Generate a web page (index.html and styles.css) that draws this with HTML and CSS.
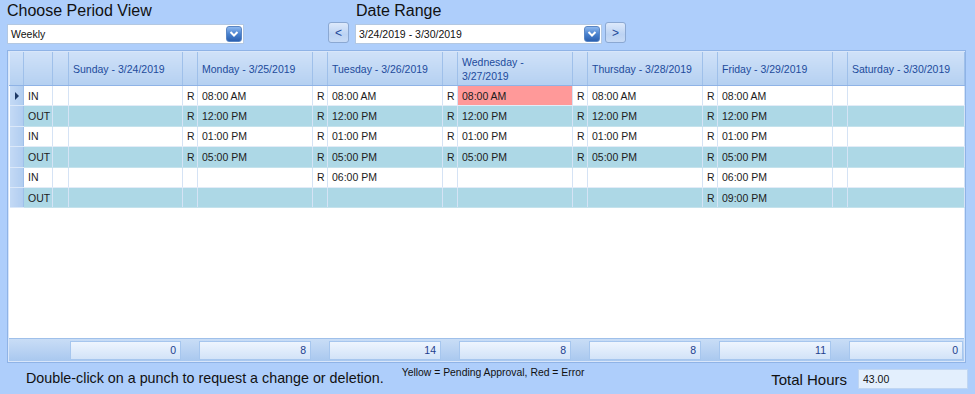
FILE: index.html
```html
<!DOCTYPE html>
<html lang="en">
<head>
  <meta charset="UTF-8" />
  <title>Timecard</title>
  <link rel="stylesheet" href="styles.css">
</head>
<body>
  <div class="top">
    <div class="field period">
      <div class="caption">Choose Period View</div>
      <div class="combo">
        <span>Weekly</span>
        <span class="drop"><svg width="10" height="8" viewBox="0 0 10 8"><path d="M1.5 2 L5 5.5 L8.5 2" fill="none" stroke="#fff" stroke-width="2"/></svg></span>
      </div>
    </div>
    <div class="field range">
      <div class="caption indent">Date Range</div>
      <div class="range-row">
        <button class="nav">&lt;</button>
        <div class="combo wide">
          <span>3/24/2019 - 3/30/2019</span>
          <span class="drop"><svg width="10" height="8" viewBox="0 0 10 8"><path d="M1.5 2 L5 5.5 L8.5 2" fill="none" stroke="#fff" stroke-width="2"/></svg></span>
        </div>
        <button class="nav">&gt;</button>
      </div>
    </div>
  </div>

  <div class="panel">
    <table class="punches">
      <colgroup>
        <col class="c-ind"><col class="c-type"><col class="c-r">
        <col class="c-day"><col class="c-r"><col class="c-day"><col class="c-r">
        <col class="c-day"><col class="c-r"><col class="c-day"><col class="c-r">
        <col class="c-day"><col class="c-r"><col class="c-day"><col class="c-r">
        <col class="c-last">
      </colgroup>
      <thead>
        <tr>
          <th></th><th></th><th></th>
          <th>Sunday - 3/24/2019</th><th></th>
          <th>Monday - 3/25/2019</th><th></th>
          <th>Tuesday - 3/26/2019</th><th></th>
          <th>Wednesday -<br>3/27/2019</th><th></th>
          <th>Thursday - 3/28/2019</th><th></th>
          <th>Friday - 3/29/2019</th><th></th>
          <th>Saturday - 3/30/2019</th>
        </tr>
      </thead>
      <tbody>
        <tr>
          <td class="ind"><span class="arrow"></span></td><td>IN</td><td></td>
          <td></td><td>R</td><td>08:00 AM</td><td>R</td><td>08:00 AM</td><td>R</td><td class="error">08:00 AM</td><td>R</td><td>08:00 AM</td><td>R</td><td>08:00 AM</td><td></td><td></td>
        </tr>
        <tr class="out">
          <td class="ind"></td><td>OUT</td><td></td>
          <td></td><td>R</td><td>12:00 PM</td><td>R</td><td>12:00 PM</td><td>R</td><td>12:00 PM</td><td>R</td><td>12:00 PM</td><td>R</td><td>12:00 PM</td><td></td><td></td>
        </tr>
        <tr>
          <td class="ind"></td><td>IN</td><td></td>
          <td></td><td>R</td><td>01:00 PM</td><td>R</td><td>01:00 PM</td><td>R</td><td>01:00 PM</td><td>R</td><td>01:00 PM</td><td>R</td><td>01:00 PM</td><td></td><td></td>
        </tr>
        <tr class="out">
          <td class="ind"></td><td>OUT</td><td></td>
          <td></td><td>R</td><td>05:00 PM</td><td>R</td><td>05:00 PM</td><td>R</td><td>05:00 PM</td><td>R</td><td>05:00 PM</td><td>R</td><td>05:00 PM</td><td></td><td></td>
        </tr>
        <tr>
          <td class="ind"></td><td>IN</td><td></td>
          <td></td><td></td><td></td><td>R</td><td>06:00 PM</td><td></td><td></td><td></td><td></td><td>R</td><td>06:00 PM</td><td></td><td></td>
        </tr>
        <tr class="out">
          <td class="ind"></td><td>OUT</td><td></td>
          <td></td><td></td><td></td><td></td><td></td><td></td><td></td><td></td><td></td><td>R</td><td>09:00 PM</td><td></td><td></td>
        </tr>
      </tbody>
    </table>
    <div class="filler"></div>
    <div class="totals">
      <div></div><div></div><div></div>
      <div class="sum">0</div><div></div>
      <div class="sum">8</div><div></div>
      <div class="sum">14</div><div></div>
      <div class="sum">8</div><div></div>
      <div class="sum">8</div><div></div>
      <div class="sum">11</div><div></div>
      <div class="sum">0</div>
    </div>
  </div>

  <div class="bottom">
    <div class="hint">Double-click on a punch to request a change or deletion.</div>
    <div class="legend">Yellow = Pending Approval, Red = Error</div>
    <div class="total">
      <span class="total-label">Total Hours</span>
      <div class="total-box">43.00</div>
    </div>
  </div>
</body>
</html>
```

FILE: styles.css
```css
body {
  margin: 0;
  padding: 0 7px;
  width: 961px;
  height: 394px;
  background: #aecefb;
  font-family: 'Liberation Sans', Arial, sans-serif;
  overflow: hidden;
}
.top {
  display: flex;
  height: 50px;
}
.caption {
  font-size: 16px;
  color: #111;
  height: 22px;
  padding-top: 2px;
  box-sizing: border-box;
  line-height: 18px;
}
.caption.indent {
  margin-left: 28px;
}
.period {
  width: 236px;
  margin-right: 85px;
}
.combo {
  position: relative;
  height: 18px;
  margin-top: 2px;
  background: #fff;
  border: 1px solid #b3c8e2;
  font-size: 10.5px;
  line-height: 18px;
  padding-left: 3px;
  color: #111;
  box-sizing: content-box;
}
.period .combo {
  width: 232px;
}
.combo.wide {
  width: 242px;
}
.drop {
  position: absolute;
  right: 1px;
  top: 1px;
  width: 16px;
  height: 16px;
  border-radius: 3px;
  background: linear-gradient(to bottom, #8db8ef, #4a82cf 50%, #2b60b0);
  border: 1px solid #5a86c4;
  box-sizing: border-box;
  display: flex;
  align-items: center;
  justify-content: center;
}
.range-row {
  display: flex;
  align-items: flex-start;
}
.nav {
  width: 21px;
  height: 21px;
  margin-top: 0;
  padding: 0;
  border: 1px solid #8ba8d2;
  border-radius: 3px;
  background: linear-gradient(to bottom, #dde9fb, #bcd3f3 60%, #c8dbf6);
  color: #23489a;
  font-family: 'Liberation Sans', Arial, sans-serif;
  font-size: 12px;
  line-height: 18px;
}
.nav:first-child {
  margin-right: 6px;
}
.nav:last-child {
  margin-left: 3px;
}
.panel {
  height: 309px;
  border: 1px solid #8fb3e6;
  box-shadow: inset 0 0 0 1px #d8e6fa;
  padding: 1px;
  background: #fff;
  display: flex;
  flex-direction: column;
  width: 955px;
  box-sizing: content-box;
}
.punches {
  border-collapse: collapse;
  table-layout: fixed;
  width: 955px;
  font-size: 10.5px;
  color: #1c1c1c;
}
.c-ind { width: 14px; }
.c-type { width: 29px; }
.c-r { width: 15px; }
.c-day { width: 115px; }
.punches col.c-r:nth-child(3) { width: 16px; }
.punches col.c-day:nth-child(4) { width: 114px; }
.c-last { width: 117px; }
.punches th {
  height: 33px;
  padding: 0 0 0 4px;
  background: linear-gradient(to bottom, #cfe1f8, #b5d0f1);
  border-right: 1px solid #9fc0ea;
  border-left: 1px solid #e0ecfb;
  border-bottom: 1px solid #8fb3e6;
  color: #1d4b9c;
  font-weight: normal;
  text-align: left;
  line-height: 14px;
}
.punches td {
  height: 19.4px;
  padding: 0 0 0 4px;
  border-right: 1px solid #d5e3f5;
  border-bottom: 1px solid #e3ecf7;
  white-space: nowrap;
  overflow: hidden;
}
.punches tr.out td {
  background: #add8e6;
  border-bottom-color: #c4e2ec;
}
.punches td.ind,
.punches tr.out td.ind {
  padding: 0;
  background: linear-gradient(to right, #c3d9f5, #b1cdf0);
  border-right: 1px solid #9fc0ea;
  border-bottom: 1px solid #dbe8f9;
  position: relative;
}
.arrow {
  position: absolute;
  left: 5px;
  top: 6px;
  border-left: 4px solid #1e3a66;
  border-top: 4px solid transparent;
  border-bottom: 4px solid transparent;
}
.punches td.error {
  background: #ff9999;
}
.filler {
  flex: 1;
  background: #fff;
}
.totals {
  display: grid;
  grid-template-columns: 14px 29px 16px 114px 15px 115px 15px 115px 15px 115px 15px 115px 15px 115px 15px 117px;
  height: 22px;
  background: linear-gradient(to bottom, #c9ddf6, #a9c8ef);
  border-top: 1px solid #9fc0ea;
  align-items: center;
}
.sum {
  height: 17px;
  margin: 0 1px 0 2px;
  border: 1px solid #a6c6ee;
  background: linear-gradient(to bottom, #eef5fe, #d2e3f8);
  color: #1d3f8e;
  font-size: 10.5px;
  line-height: 17px;
  text-align: right;
  padding-right: 4px;
}
.bottom {
  display: flex;
  align-items: flex-start;
  padding-top: 4px;
}
.hint {
  font-size: 14.3px;
  color: #111;
  margin-left: 19px;
  padding-top: 3px;
}
.legend {
  font-size: 10.4px;
  color: #111;
  margin-left: 18px;
}
.total {
  margin-left: auto;
  display: flex;
  align-items: center;
  padding-top: 2px;
}
.total-label {
  font-size: 15px;
  color: #111;
  margin-right: 11px;
}
.total-box {
  width: 104px;
  height: 18px;
  padding-left: 4px;
  background: #e3effd;
  border: 1px solid #c0d6f2;
  font-size: 10.5px;
  line-height: 18px;
  color: #111;
}
```
